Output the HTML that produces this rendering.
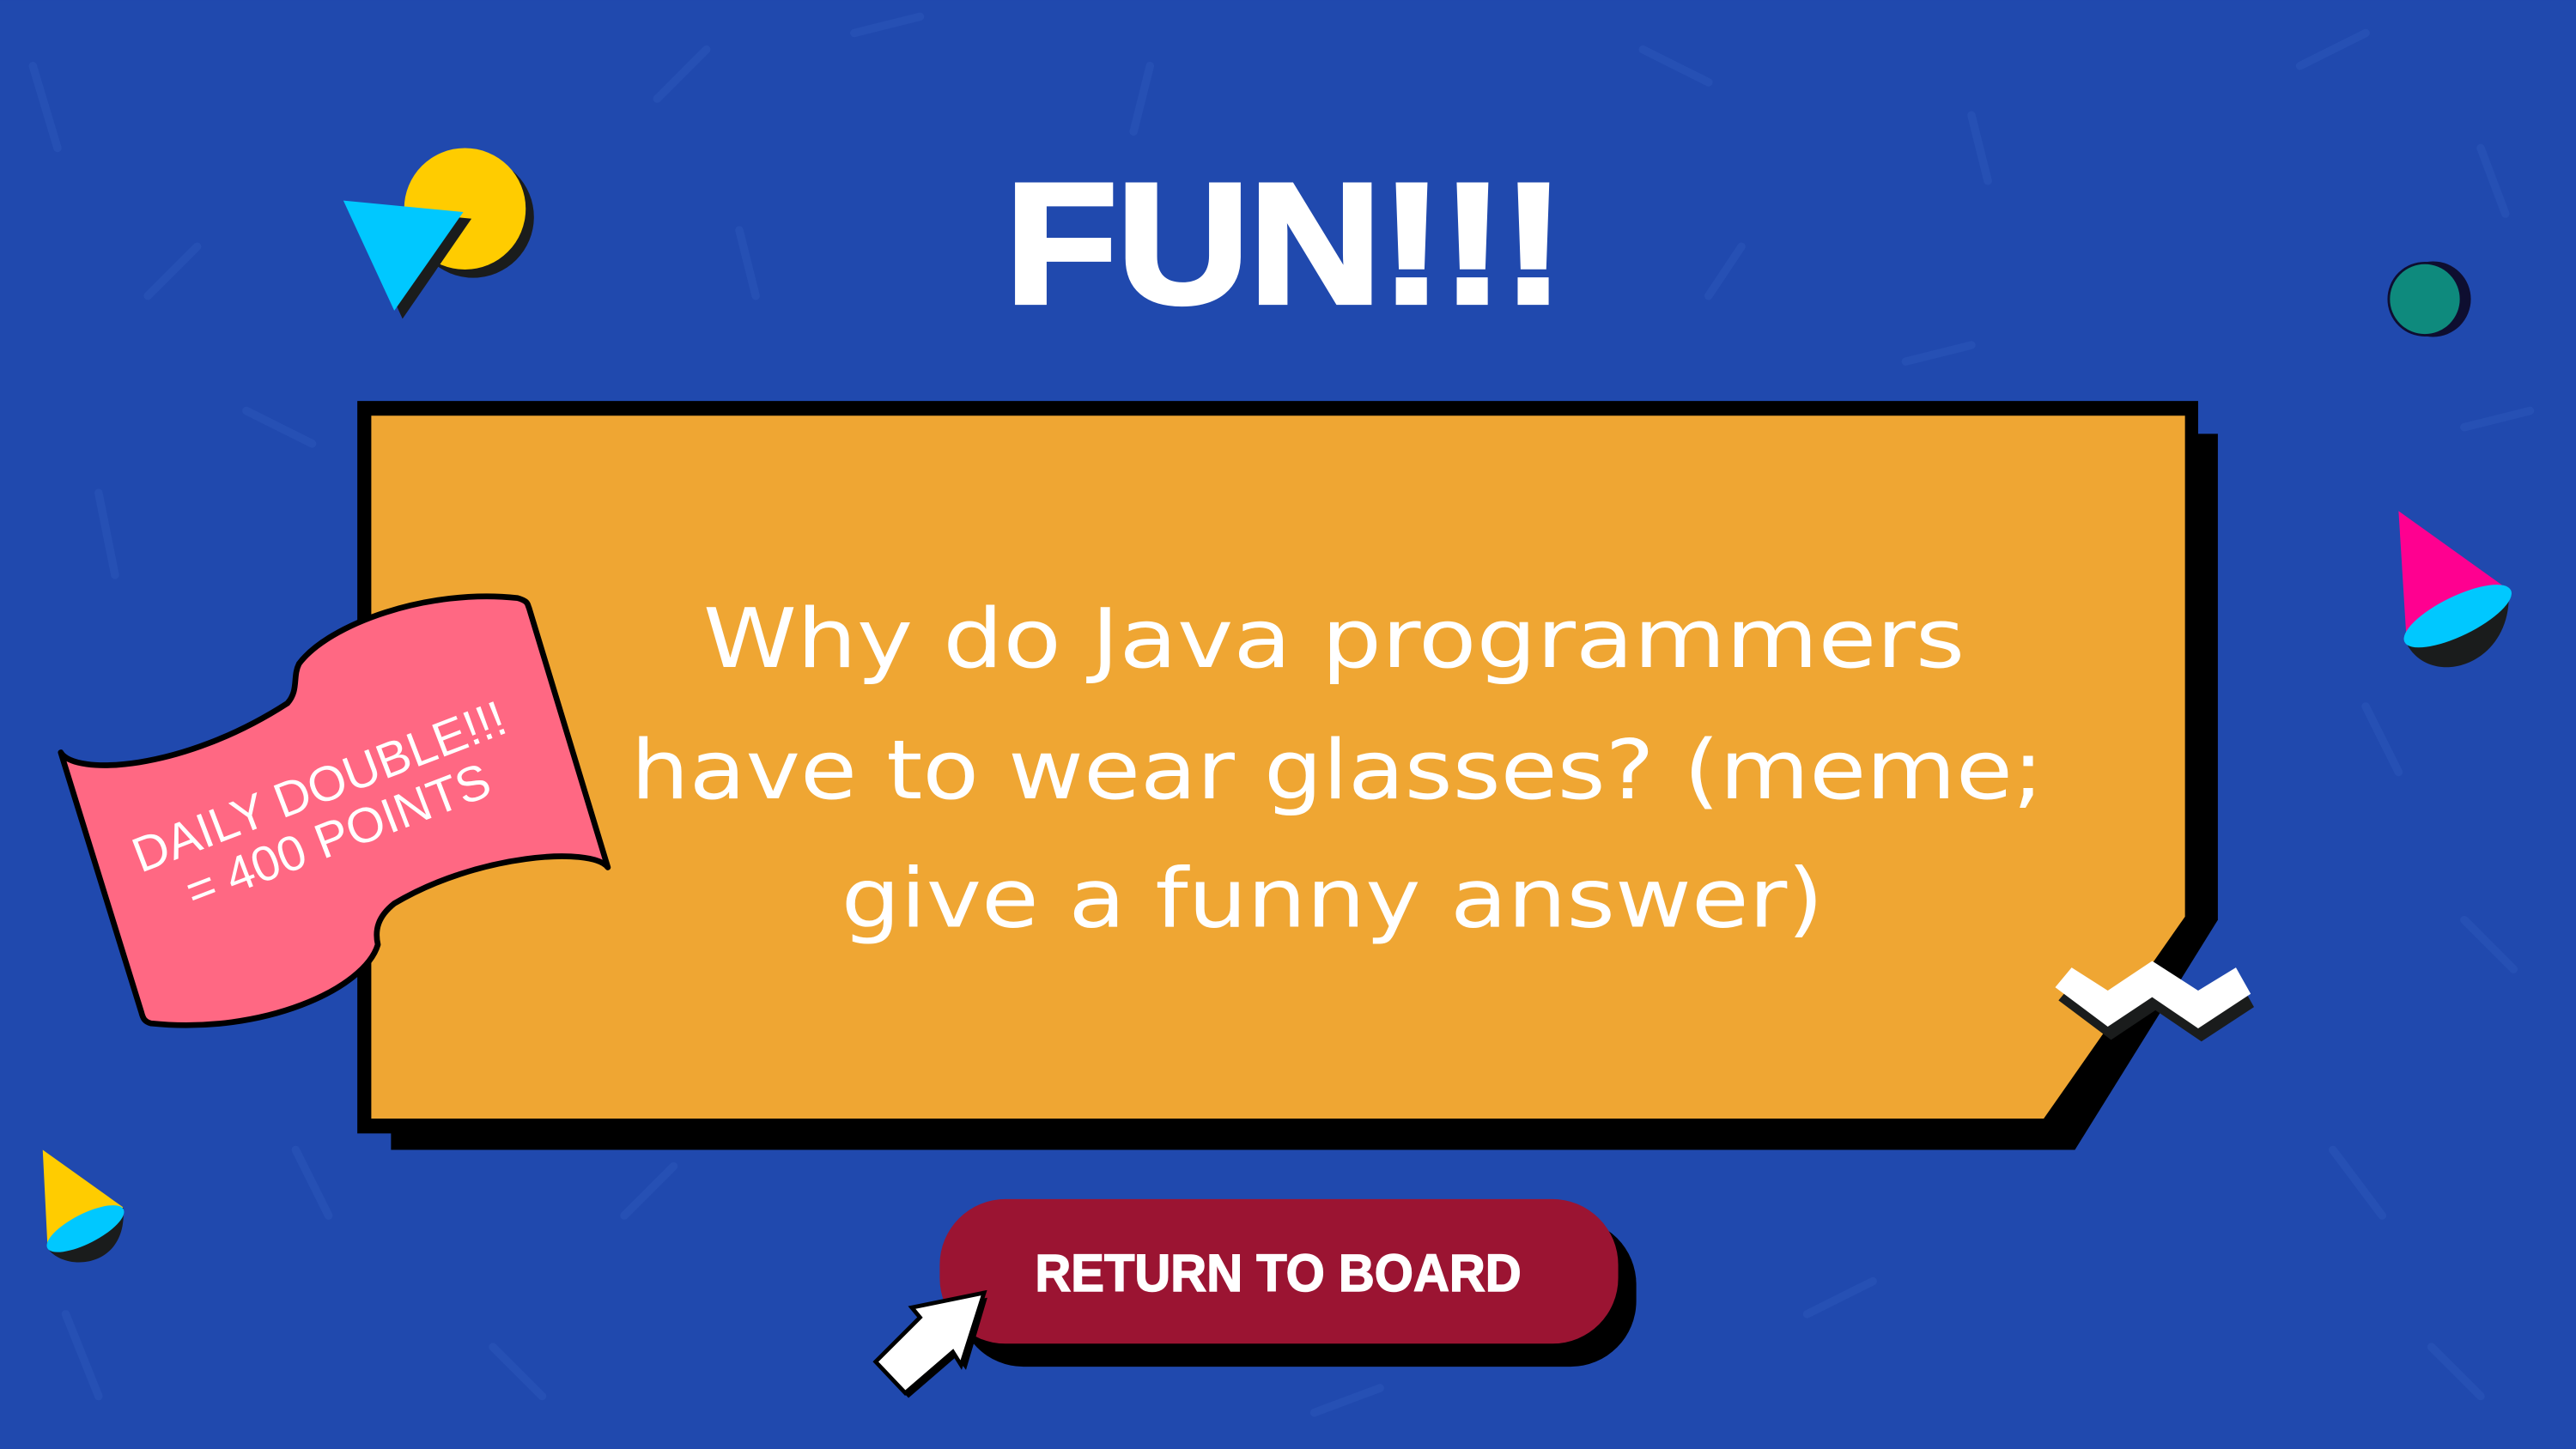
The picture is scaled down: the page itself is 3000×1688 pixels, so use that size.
<!DOCTYPE html>
<html><head><meta charset="utf-8"><style>
html,body{margin:0;padding:0;background:#2049AE;}
svg{display:block}
</style></head><body>
<svg width="3000" height="1688" viewBox="0 0 1568 882" xmlns="http://www.w3.org/2000/svg">
<rect width="1568" height="882" fill="#2049AE"/>
<g stroke="#2650B4" stroke-width="5" stroke-linecap="round">
<line x1="20" y1="40" x2="35" y2="90"/><line x1="90" y1="180" x2="120" y2="150"/><line x1="60" y1="300" x2="70" y2="350"/>
<line x1="150" y1="250" x2="190" y2="270"/><line x1="120" y1="560" x2="100" y2="600"/><line x1="40" y1="800" x2="60" y2="850"/>
<line x1="400" y1="60" x2="430" y2="30"/><line x1="520" y1="20" x2="560" y2="10"/><line x1="700" y1="40" x2="690" y2="80"/>
<line x1="1000" y1="30" x2="1040" y2="50"/><line x1="1200" y1="70" x2="1210" y2="110"/><line x1="1400" y1="40" x2="1440" y2="20"/>
<line x1="1510" y1="90" x2="1525" y2="130"/><line x1="1500" y1="260" x2="1540" y2="250"/><line x1="1440" y1="430" x2="1460" y2="470"/>
<line x1="1500" y1="560" x2="1530" y2="590"/><line x1="1420" y1="700" x2="1450" y2="740"/><line x1="1480" y1="820" x2="1510" y2="850"/>
<line x1="1100" y1="800" x2="1140" y2="780"/><line x1="800" y1="860" x2="840" y2="845"/><line x1="300" y1="820" x2="330" y2="850"/>
<line x1="180" y1="700" x2="200" y2="740"/><line x1="380" y1="740" x2="410" y2="710"/><line x1="450" y1="140" x2="460" y2="180"/>
<line x1="1040" y1="180" x2="1060" y2="150"/><line x1="1160" y1="220" x2="1200" y2="210"/>
</g>
<!-- orange box -->
<polygon points="238,264 1350,264 1350,560 1263,700 238,700" fill="#000"/>
<polygon points="217.5,244 1338,244 1338,560 1252,690 217.5,690" fill="#000"/>
<polygon points="226,253 1330,253 1330,558 1244,681 226,681" fill="#EFA633"/>
<!-- zigzag -->
<polygon points="1253,609 1263,597 1285,611 1312,593 1340,611 1363,597 1372,613 1340,634 1312,615 1285,633" fill="#1a1c1c"/>
<polygon points="1251,601 1261,589 1283,603 1310,585 1338,603 1361,589 1370,605 1338,626 1310,607 1283,625" fill="#fff"/>
<!-- question -->
<g fill="#fff" font-family="'DejaVu Sans',sans-serif" font-size="50" text-anchor="start">
<text x="428" y="406" textLength="768" lengthAdjust="spacingAndGlyphs">Why do Java programmers</text>
<text x="384" y="486" textLength="860" lengthAdjust="spacingAndGlyphs">have to wear glasses? (meme;</text>
<text x="512" y="564" textLength="598" lengthAdjust="spacingAndGlyphs">give a  funny answer)</text>
</g>
<!-- flag -->
<path d="M37,458 C45,472 110,470 175,428 C182,420 178,412 182,404 C200,380 260,358 315,364 C322,366 321,368 322,370 L370,528 C360,515 290,520 240,550 C230,558 228,566 230,575 C222,602 160,630 92,623 C88,622 87,620 86,616 Z" fill="#FF6883" stroke="#000" stroke-width="3.5" stroke-linejoin="round"/>
<g transform="translate(200,494) rotate(-21)" fill="#fff" font-family="'Liberation Sans',sans-serif" font-size="30" text-anchor="middle">
<text x="0" y="-6">DAILY DOUBLE!!!</text>
<text x="0" y="26">= 400 POINTS</text>
</g>
<!-- heading -->
<text x="612" y="184" font-family="'Liberation Sans Narrow','Liberation Sans',sans-serif" font-weight="bold" font-size="104" fill="#fff" stroke="#fff" stroke-width="3" textLength="340" lengthAdjust="spacingAndGlyphs">FUN!!!</text>
<!-- button -->
<rect x="583" y="742" width="413" height="90" rx="40" fill="#000"/>
<rect x="572" y="730" width="413" height="88" rx="40" fill="#9B1432"/>
<text x="630" y="786" font-family="'Liberation Sans Narrow','Liberation Sans',sans-serif" font-weight="bold" font-size="32" fill="#fff" stroke="#fff" stroke-width="0.8" textLength="296" lengthAdjust="spacingAndGlyphs">RETURN TO BOARD</text>
<!-- cursor -->
<polygon points="601,790 558,799 563,805 535,832 553,851 582,826 588,834" fill="#000"/>
<polygon points="599,787 555,796 560,802 533,829 551,848 580,823 585,831" fill="#fff" stroke="#000" stroke-width="2.5" stroke-linejoin="miter"/>
<!-- yellow circle + triangle -->
<circle cx="288" cy="132" r="37" fill="#1a1c1c"/>
<circle cx="283" cy="127" r="37" fill="#FFCC00"/>
<polygon points="214,126 287,133 245,194" fill="#1a1c1c"/>
<polygon points="209,122 282,129 240,189" fill="#00C8FF"/>
<!-- teal circle -->
<circle cx="1481" cy="182" r="23" fill="#0E0E30"/>
<circle cx="1476" cy="182" r="22" fill="#0E8A7D" stroke="#0E0E30" stroke-width="1.5"/>
<!-- pink cone -->
<path d="M1465,392 C1480,420 1530,405 1527,359 Z" fill="#1a1c1c"/>
<polygon points="1460,311 1527,359 1465,392" fill="#FF0090"/>
<ellipse cx="1496" cy="375" rx="36" ry="12" transform="rotate(-26 1496 375)" fill="#00C8FF"/>
<!-- yellow cone -->
<path d="M29,760 C40,775 78,772 75,735 Z" fill="#1a1c1c"/>
<polygon points="26,700 75,735 29,760" fill="#FFCC00"/>
<ellipse cx="52" cy="748" rx="26" ry="9" transform="rotate(-27 52 748)" fill="#00C8FF"/>
</svg>
</body></html>
